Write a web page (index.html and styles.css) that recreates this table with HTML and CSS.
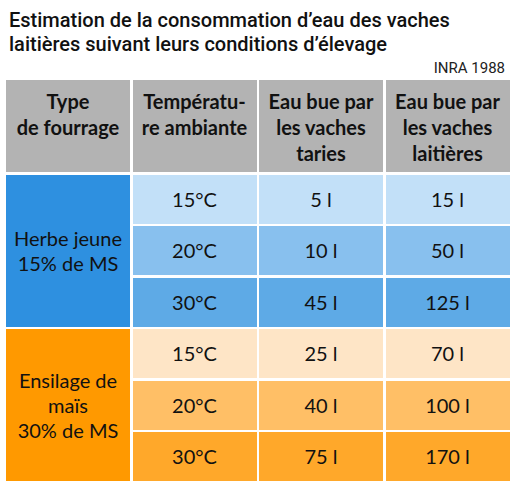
FILE: index.html
```html
<!doctype html>
<html>
<head>
<meta charset="utf-8">
<title>Consommation d'eau des vaches</title>
<link rel="stylesheet" href="styles.css">
</head>
<body>
<div class="title">
	<h1>Estimation de la consommation d’eau des vaches<br>laitières suivant leurs conditions d’élevage</h1>
	<p class="source">INRA 1988</p>
</div>

<div class="table">
	<div class="head">Type<br>de fourrage</div>
	<div class="head">Températu-<br>re ambiante</div>
	<div class="head">Eau bue par<br>les vaches<br>taries</div>
	<div class="head">Eau bue par<br>les vaches<br>laitières</div>

	<div class="type herbe">Herbe jeune<br>15% de MS</div>
	<div class="cell b1">15°C</div>
	<div class="cell b1">5 l</div>
	<div class="cell b1">15 l</div>
	<div class="cell b2">20°C</div>
	<div class="cell b2">10 l</div>
	<div class="cell b2">50 l</div>
	<div class="cell b3">30°C</div>
	<div class="cell b3">45 l</div>
	<div class="cell b3">125 l</div>

	<div class="type mais">Ensilage de<br>maïs<br>30% de MS</div>
	<div class="cell o1">15°C</div>
	<div class="cell o1">25 l</div>
	<div class="cell o1">70 l</div>
	<div class="cell o2">20°C</div>
	<div class="cell o2">40 l</div>
	<div class="cell o2">100 l</div>
	<div class="cell o3">30°C</div>
	<div class="cell o3">75 l</div>
	<div class="cell o3">170 l</div>
</div>
</body>
</html>
```

FILE: styles.css
```css
* {
	margin: 0;
	padding: 0;
	box-sizing: border-box;
}

body {
	background: #fff;
	color: #111;
	font-family: Lato, "Liberation Sans", sans-serif;
}

.title {
	padding: 8px 12px 0 9px;
	height: 80px;
}

.title h1 {
	font: 500 20px/24px Roboto, "Liberation Sans", sans-serif;
	color: #111;
}

.source {
	font: 400 15px/16px Roboto, "Liberation Sans", sans-serif;
	text-align: right;
	margin-top: 4px;
	color: #222;
}

.table {
	display: grid;
	grid-template-columns: repeat(4, 124px);
	grid-template-rows: 92px repeat(6, 49px);
	gap: 2.5px;
	margin-left: 6px;
}

.head {
	background: #b3b3b3;
	font-weight: bold;
	font-size: 20px;
	line-height: 26px;
	text-align: center;
	padding-top: 8px;
}

.cell,
.type {
	display: flex;
	align-items: center;
	justify-content: center;
	text-align: center;
	font-size: 20px;
	line-height: 25px;
}

.type {
	grid-column: 1;
	grid-row: span 3;
}

.herbe { background: #2e90e0; }
.mais { background: #ff9900; }

.b1 { background: #c2e0f8; }
.b2 { background: #88c0ee; }
.b3 { background: #5eaae6; }
.o1 { background: #fee5c6; }
.o2 { background: #ffbf66; }
.o3 { background: #ffa82a; }
```
